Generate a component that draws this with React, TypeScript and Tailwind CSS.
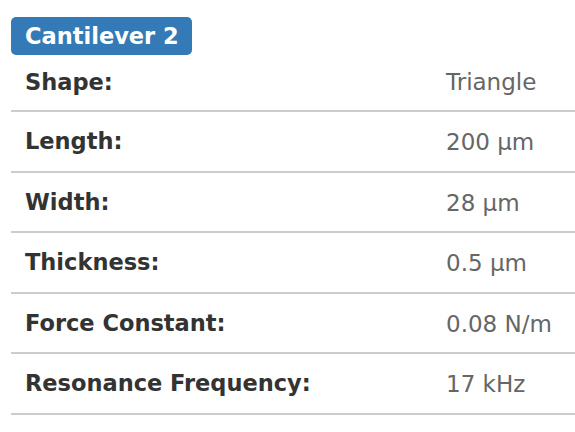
import React from 'react';

// Cantilever spec rows
const specs = [
  { label: 'Shape:', value: 'Triangle' },
  { label: 'Length:', value: '200 μm' },
  { label: 'Width:', value: '28 μm' },
  { label: 'Thickness:', value: '0.5 μm' },
  { label: 'Force Constant:', value: '0.08 N/m' },
  { label: 'Resonance Frequency:', value: '17 kHz' },
];

const App: React.FC = () => {
  return (
    <div className="bg-white w-[575px] h-[432px] pl-[11px] pt-[17px] font-['DejaVu_Sans',Verdana,sans-serif]">
      {/* badge */}
      <div className="inline-flex items-center h-[38px] pl-[14px] pr-[13px] rounded-[5px] bg-[#337ab7] text-white font-bold text-[22.5px] leading-none">
        Cantilever 2
      </div>

      {/* spec table */}
      <div className="flex flex-col">
        {specs.map((row, i) => (
          <div
            key={row.label}
            className={`flex items-center border-b-2 border-[#cccccc] ${i === 0 ? 'h-[57px]' : 'h-[60.5px] pt-[2px]'}`}
          >
            <div className="w-[435px] pl-[14px] text-[22.5px] font-bold text-[#333333]">{row.label}</div>
            <div className="text-[23px] text-[#666666]">{row.value}</div>
          </div>
        ))}
      </div>
    </div>
  );
};

export default App;
